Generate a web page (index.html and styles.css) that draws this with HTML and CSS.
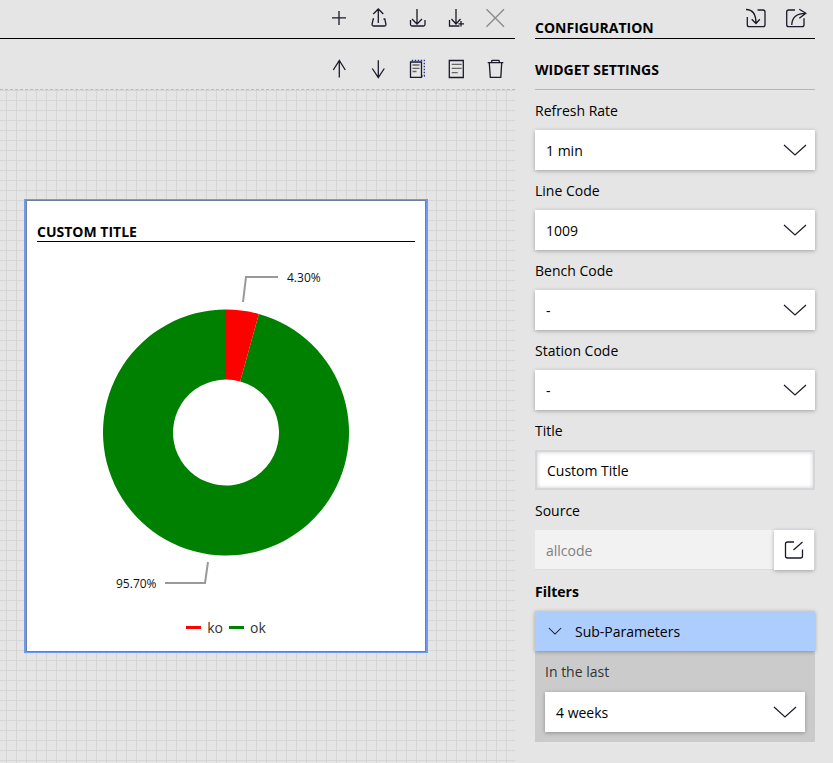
FILE: index.html
```html
<!DOCTYPE html>
<html lang="en">
<head>
<meta charset="utf-8">
<title>Widget configuration</title>
<link rel="stylesheet" href="styles.css">
</head>
<body>
<div class="app">
  <main class="editor">
    <div class="toolbar toolbar-top">
      <svg class="icon" viewBox="0 0 24 24"><path d="M12 5v14M5 11.800h14"/></svg>
      <svg class="icon" viewBox="0 0 24 24"><path d="M12.300 3v14M7.300 8l5-5 5 5M8 13H7.200L6 18.500Q6 20 7.500 20h11q1.500 0 1.500-1.500L18.800 13H17.500"/></svg>
      <svg class="icon" viewBox="0 0 24 24"><path d="M12 3v15M7 13l5 5 5-5M5.500 14v4.500Q5.500 20 7 20h11.500q1.500 0 1.500-1.500V14"/></svg>
      <svg class="icon" viewBox="0 0 24 24"><path d="M12 3v15M7.500 13l4.500 5 4.500-5M5.500 14v6h10M17 15v5.500M14.500 17.800h5.500"/></svg>
      <svg class="icon icon-muted" viewBox="0 0 24 24"><path d="M3.500 3.300 21 20.700M21 3.300 3.500 20.700"/></svg>
    </div>
    <div class="toolbar toolbar-second">
      <svg class="icon" viewBox="0 0 24 24"><path d="M12.300 4.500v17M6.300 14l6-9.500 6 9.500"/></svg>
      <svg class="icon" viewBox="0 0 24 24"><path d="M12.300 4.300v17M6.300 12.500l6 9 6-9"/></svg>
      <svg class="icon" viewBox="0 0 24 24"><path d="M5.500 6H16.500V21.300H5.500z"/><path class="icon-line" d="M7.500 9h7M7.500 12.300h7M7.500 15.500h4"/><path class="dotted" d="M6.700 4.300H19.300V20H17"/></svg>
      <svg class="icon" viewBox="0 0 24 24"><path d="M5.300 4.500h14v17h-14z"/><path class="icon-line" d="M7.700 8.300h10M7.700 12.300h10M7.700 16.700h6"/></svg>
      <svg class="icon" viewBox="0 0 24 24"><path d="M4.700 6.700H20.300M8.700 6.700V5q0-.7.7-.7h6.100q.7 0 .7.700v1.700M6.300 7l1 14.300h10.500L18.700 7"/></svg>
    </div>
    <div class="canvas">
      <section class="widget">
        <h2 class="widget-title">CUSTOM TITLE</h2>
        <svg class="donut" viewBox="0 0 396 360">
          <path fill="#008000" d="M230.830 71.960A123 123 0 1 1 198 67.500V137.500A53 53 0 1 0 212.150 139.420Z"/>
          <path fill="#ff0000" d="M198 67.500A123 123 0 0 1 230.830 71.960L212.150 139.420A53 53 0 0 0 198 137.500Z"/>
          <path class="leader" d="M215 60 218 35H250"/>
          <path class="leader" d="M180 320 177 341H137"/>
          <text class="pct" x="259" y="40">4.30%</text>
          <text class="pct" x="88" y="346">95.70%</text>
        </svg>
        <div class="legend">
          <span class="swatch swatch-ko"></span><span class="legend-label">ko</span>
          <span class="swatch swatch-ok"></span><span class="legend-label">ok</span>
        </div>
      </section>
    </div>
  </main>
  <aside class="panel">
    <header class="panel-head">
      <h1 class="panel-title">CONFIGURATION</h1>
      <div class="panel-actions">
        <svg class="icon" viewBox="0 0 24 24"><path d="M13.500 4H19q2 0 2 2v12.700q0 2-2 2H5.300q-2 0-2-2V11M2 3.500c6.500 0 10 4 10 14M7.700 13.300 12 17.500l3.800-4.200"/></svg>
        <svg class="icon" viewBox="0 0 24 24"><path d="M11 4H4.700q-2 0-2 2v12.700q0 2 2 2H18q2 0 2-2v-6.400M7.700 19C8 12 12 7.300 21.500 7.300M15.300 3.300l6.500 4-6.500 5"/></svg>
      </div>
    </header>
    <h2 class="section-title">WIDGET SETTINGS</h2>
    <label class="field-label">Refresh Rate</label>
    <div class="select"><span>1 min</span><svg class="chev" viewBox="0 0 24 12"><path d="M1 1l11 10L23 1"/></svg></div>
    <label class="field-label">Line Code</label>
    <div class="select"><span>1009</span><svg class="chev" viewBox="0 0 24 12"><path d="M1 1l11 10L23 1"/></svg></div>
    <label class="field-label">Bench Code</label>
    <div class="select"><span>-</span><svg class="chev" viewBox="0 0 24 12"><path d="M1 1l11 10L23 1"/></svg></div>
    <label class="field-label">Station Code</label>
    <div class="select"><span>-</span><svg class="chev" viewBox="0 0 24 12"><path d="M1 1l11 10L23 1"/></svg></div>
    <label class="field-label">Title</label>
    <div class="text-input">Custom Title</div>
    <label class="field-label">Source</label>
    <div class="source">
      <span class="source-value">allcode</span>
      <button class="source-btn"><svg class="icon-small" viewBox="0 0 20 20"><path d="M10 2H3.500q-2 0-2 2v12q0 2 2 2h13q2 0 2-2V9.500M9.500 10l9-8"/></svg></button>
    </div>
    <div class="filters-label">Filters</div>
    <div class="accordion-head">
      <svg class="chev-small" viewBox="0 0 16 10"><path d="M1 1l7 7 7-7"/></svg>
      <span>Sub-Parameters</span>
    </div>
    <div class="accordion-body">
      <label class="field-label-inner">In the last</label>
      <div class="select"><span>4 weeks</span><svg class="chev" viewBox="0 0 24 12"><path d="M1 1l11 10L23 1"/></svg></div>
    </div>
  </aside>
</div>
</body>
</html>
```
FILE: styles.css
```css
* { box-sizing: border-box; }
html, body { margin: 0; height: 100%; }
body {
  background: #e5e5e5;
  color: #000;
  font-family: "Open Sans", sans-serif;
  font-size: 14px;
  overflow: hidden;
}
.app { display: flex; width: 833px; height: 763px; }
.editor { width: 515px; display: flex; flex-direction: column; flex: none; }
.toolbar { display: flex; align-items: center; justify-content: flex-end; gap: 15px; padding-right: 8px; }
.toolbar-top { height: 39px; border-bottom: 1px solid #000; padding-bottom: 3px; }
.toolbar-second { height: 50px; padding-top: 8px; }
.icon { width: 24px; height: 24px; fill: none; stroke: #1a1a2a; stroke-width: 1.300; flex: none; }
.icon-muted { stroke: #8a8a8a; }
.icon-line { stroke: #666; }
.dotted { stroke-dasharray: 1.500 1.500; stroke: #23308c; }
.canvas {
  flex: 1;
  border-top: 1px dashed #bbb;
  background-color: #e5e5e5;
  background-image:
    linear-gradient(to right, #d6d6d6 1px, transparent 1px),
    linear-gradient(to bottom, #d6d6d6 1px, transparent 1px);
  background-size: 10px 10px;
  background-position: 6px 0;
  padding: 109px 0 0 24px;
}
.widget {
  width: 404px;
  height: 454px;
  background: #fff;
  border: solid #6b9bf5;
  border-width: 1px 2px;
  box-shadow: inset 0 0 0 1px #6f7f9f;
  padding: 23px 11px 0;
}
.widget-title {
  margin: 0;
  font-size: 14px;
  line-height: 18px;
  font-weight: 700;
  border-bottom: 1px solid #000;
}
.donut { display: block; width: 396px; height: 360px; margin: 0 -9px; }
.leader { fill: none; stroke: #999; stroke-width: 2; }
.pct { font-family: "Open Sans", sans-serif; font-size: 12px; fill: #111; }
.legend { display: flex; align-items: center; justify-content: center; margin: 16px 0 0 6px; font-size: 14px; color: #333; }
.swatch { width: 15px; height: 3px; }
.swatch-ko { background: #f00; }
.swatch-ok { background: #008000; }
.legend-label { margin: 0 6px; }
.panel { width: 280px; margin-left: 20px; flex: none; }
.panel-head { height: 39px; border-bottom: 1px solid #000; padding-bottom: 1px; display: flex; justify-content: space-between; align-items: flex-end; }
.panel-title { margin: 0; font-size: 14px; line-height: 19px; font-weight: 700; }
.panel-actions { display: flex; gap: 16px; margin-right: 7px; align-self: flex-start; padding-top: 6px; }
.section-title {
  margin: 0;
  height: 51px;
  padding-top: 21px;
  font-size: 14px;
  line-height: 19px;
  font-weight: 700;
  border-bottom: 1px solid #b5b5b5;
}
.field-label { display: block; height: 20px; line-height: 20px; margin: 11px 0 9px; }
.select {
  height: 40px;
  background: #fff;
  display: flex;
  align-items: center;
  justify-content: space-between;
  padding: 0 8px 0 11px;
  box-shadow: 0 1px 4px rgba(0,0,0,.3);
}
.chev { width: 24px; height: 12px; fill: none; stroke: #1a1a2a; stroke-width: 1.200; }
.text-input {
  height: 40px;
  background: #fff;
  border: 2px solid #d6d6da;
  box-shadow: inset 0 0 4px rgba(0,0,0,.2);
  display: flex;
  align-items: center;
  padding-left: 10px;
}
.source { display: flex; height: 40px; background: #f2f2f2; border-bottom: 1px solid #ddd; }
.source-value { flex: 1; color: #808080; padding-left: 11px; line-height: 41px; }
.source-btn {
  width: 40px; height: 40px;
  margin-right: 1px;
  border: 0; padding: 0;
  background: #fff;
  display: flex; align-items: center; justify-content: center;
  box-shadow: 0 1px 4px rgba(0,0,0,.3);
}
.icon-small { width: 20px; height: 20px; fill: none; stroke: #1a1a2a; stroke-width: 1.300; }
.filters-label { font-weight: 700; line-height: 20px; margin: 12px 0 9px; }
.accordion-head {
  height: 40px;
  background: #adcdff;
  display: flex;
  align-items: center;
  gap: 13px;
  padding-left: 13px;
  box-shadow: 0 1px 4px rgba(0,0,0,.3);
  position: relative;
}
.chev-small { width: 14px; height: 9px; fill: none; stroke: #1a1a2a; stroke-width: 1.200; }
.accordion-body { background: #cbcbcb; padding: 11px 10px 10px; height: 91px; }
.field-label-inner { display: block; line-height: 20px; margin-bottom: 10px; color: #333; }
```
